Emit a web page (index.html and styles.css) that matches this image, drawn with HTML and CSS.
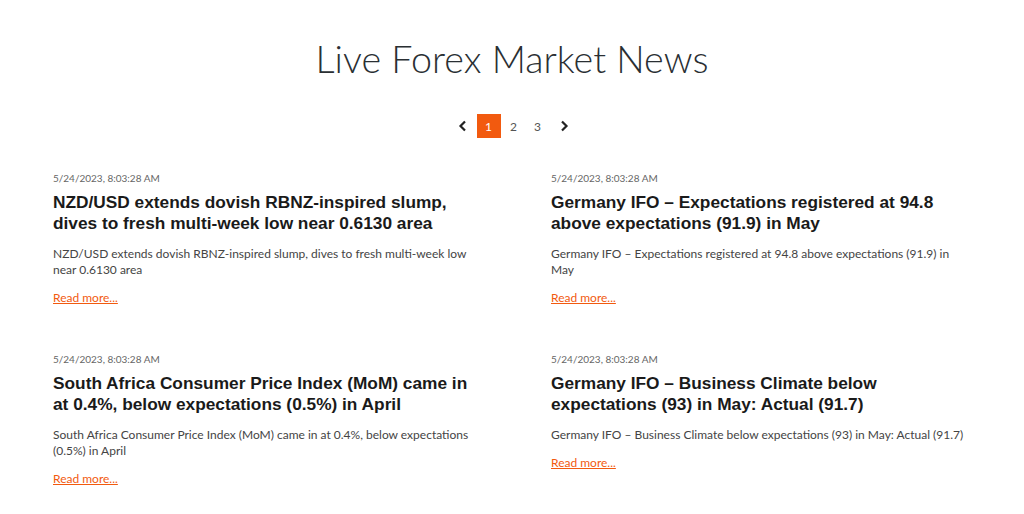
FILE: index.html
```html
<!DOCTYPE html>
<html>
<head>
<meta charset="utf-8">
<link rel="stylesheet" href="styles.css">
</head>
<body>
<div class="page">
  <h1 class="title">Live Forex Market News</h1>
  <nav class="pager">
    <span class="arrow prev"><svg width="10" height="12" viewBox="0 0 10 12"><path d="M7 1.5 L2.5 6 L7 10.5" fill="none" stroke="#222" stroke-width="2.2"/></svg></span>
    <span class="pg active">1</span>
    <span class="pg">2</span>
    <span class="pg">3</span>
    <span class="arrow next"><svg width="10" height="12" viewBox="0 0 10 12"><path d="M3 1.5 L7.5 6 L3 10.5" fill="none" stroke="#222" stroke-width="2.2"/></svg></span>
  </nav>
  <div class="grid">
    <article class="card">
      <div class="date">5/24/2023, 8:03:28 AM</div>
      <h2 class="head">NZD/USD extends dovish RBNZ-inspired slump, dives to fresh multi-week low near 0.6130 area</h2>
      <p class="desc">NZD/USD extends dovish RBNZ-inspired slump, dives to fresh multi-week low near 0.6130 area</p>
      <a class="more" href="#">Read more...</a>
    </article>
    <article class="card">
      <div class="date">5/24/2023, 8:03:28 AM</div>
      <h2 class="head">Germany IFO – Expectations registered at 94.8 above expectations (91.9) in May</h2>
      <p class="desc">Germany IFO – Expectations registered at 94.8 above expectations (91.9) in May</p>
      <a class="more" href="#">Read more...</a>
    </article>
    <article class="card">
      <div class="date">5/24/2023, 8:03:28 AM</div>
      <h2 class="head">South Africa Consumer Price Index (MoM) came in at 0.4%, below expectations (0.5%) in April</h2>
      <p class="desc">South Africa Consumer Price Index (MoM) came in at 0.4%, below expectations (0.5%) in April</p>
      <a class="more" href="#">Read more...</a>
    </article>
    <article class="card">
      <div class="date">5/24/2023, 8:03:28 AM</div>
      <h2 class="head">Germany IFO – Business Climate below expectations (93) in May: Actual (91.7)</h2>
      <p class="desc">Germany IFO – Business Climate below expectations (93) in May: Actual (91.7)</p>
      <a class="more" href="#">Read more...</a>
    </article>
  </div>
</div>
</body>
</html>
```
FILE: styles.css
```css
* { box-sizing: border-box; }
html, body { margin: 0; padding: 0; background: #fff; }
body { font-family: Lato, "Open Sans", sans-serif; color: #333; }
.page { width: 918px; margin: 0 auto; padding-top: 36px; }
.title {
  margin: 0;
  text-align: center;
  font-family: Lato, sans-serif;
  font-weight: 300;
  font-size: 37.7px;
  line-height: 46px;
  color: #2a2f33;
}
.pager {
  display: flex;
  justify-content: center;
  align-items: center;
  margin-top: 32px;
  height: 24px;
  padding-left: 2px;
}
.arrow { width: 24px; height: 24px; display: flex; align-items: center; justify-content: center; }
.arrow.prev { margin-right: 2px; }
.arrow.next { margin-left: 2px; }
.pg {
  width: 24px; height: 24px;
  display: flex; align-items: center; justify-content: center;
  font-size: 12px; color: #555;
}
.pg.active { background: #f25a0f; color: #fff; margin-right: 1px; }
.grid {
  display: grid;
  grid-template-columns: 420px 420px;
  column-gap: 78px;
  row-gap: 46px;
  margin-top: 33px;
}
.card { display: flex; flex-direction: column; align-items: flex-start; }
.date { font-size: 10px; color: #666; line-height: 14px; }
.head {
  margin: 7px 0 0;
  font-family: "Liberation Sans", Arial, sans-serif;
  font-weight: 700;
  font-size: 17.3px;
  line-height: 21px;
  color: #1a1a1a;
}
.desc {
  margin: 12px 0 0;
  font-size: 12px;
  line-height: 16px;
  color: #444;
}
.more {
  margin-top: 12px;
  font-size: 12px;
  line-height: 16px;
  color: #f25a0f;
  text-decoration: underline;
}
```
